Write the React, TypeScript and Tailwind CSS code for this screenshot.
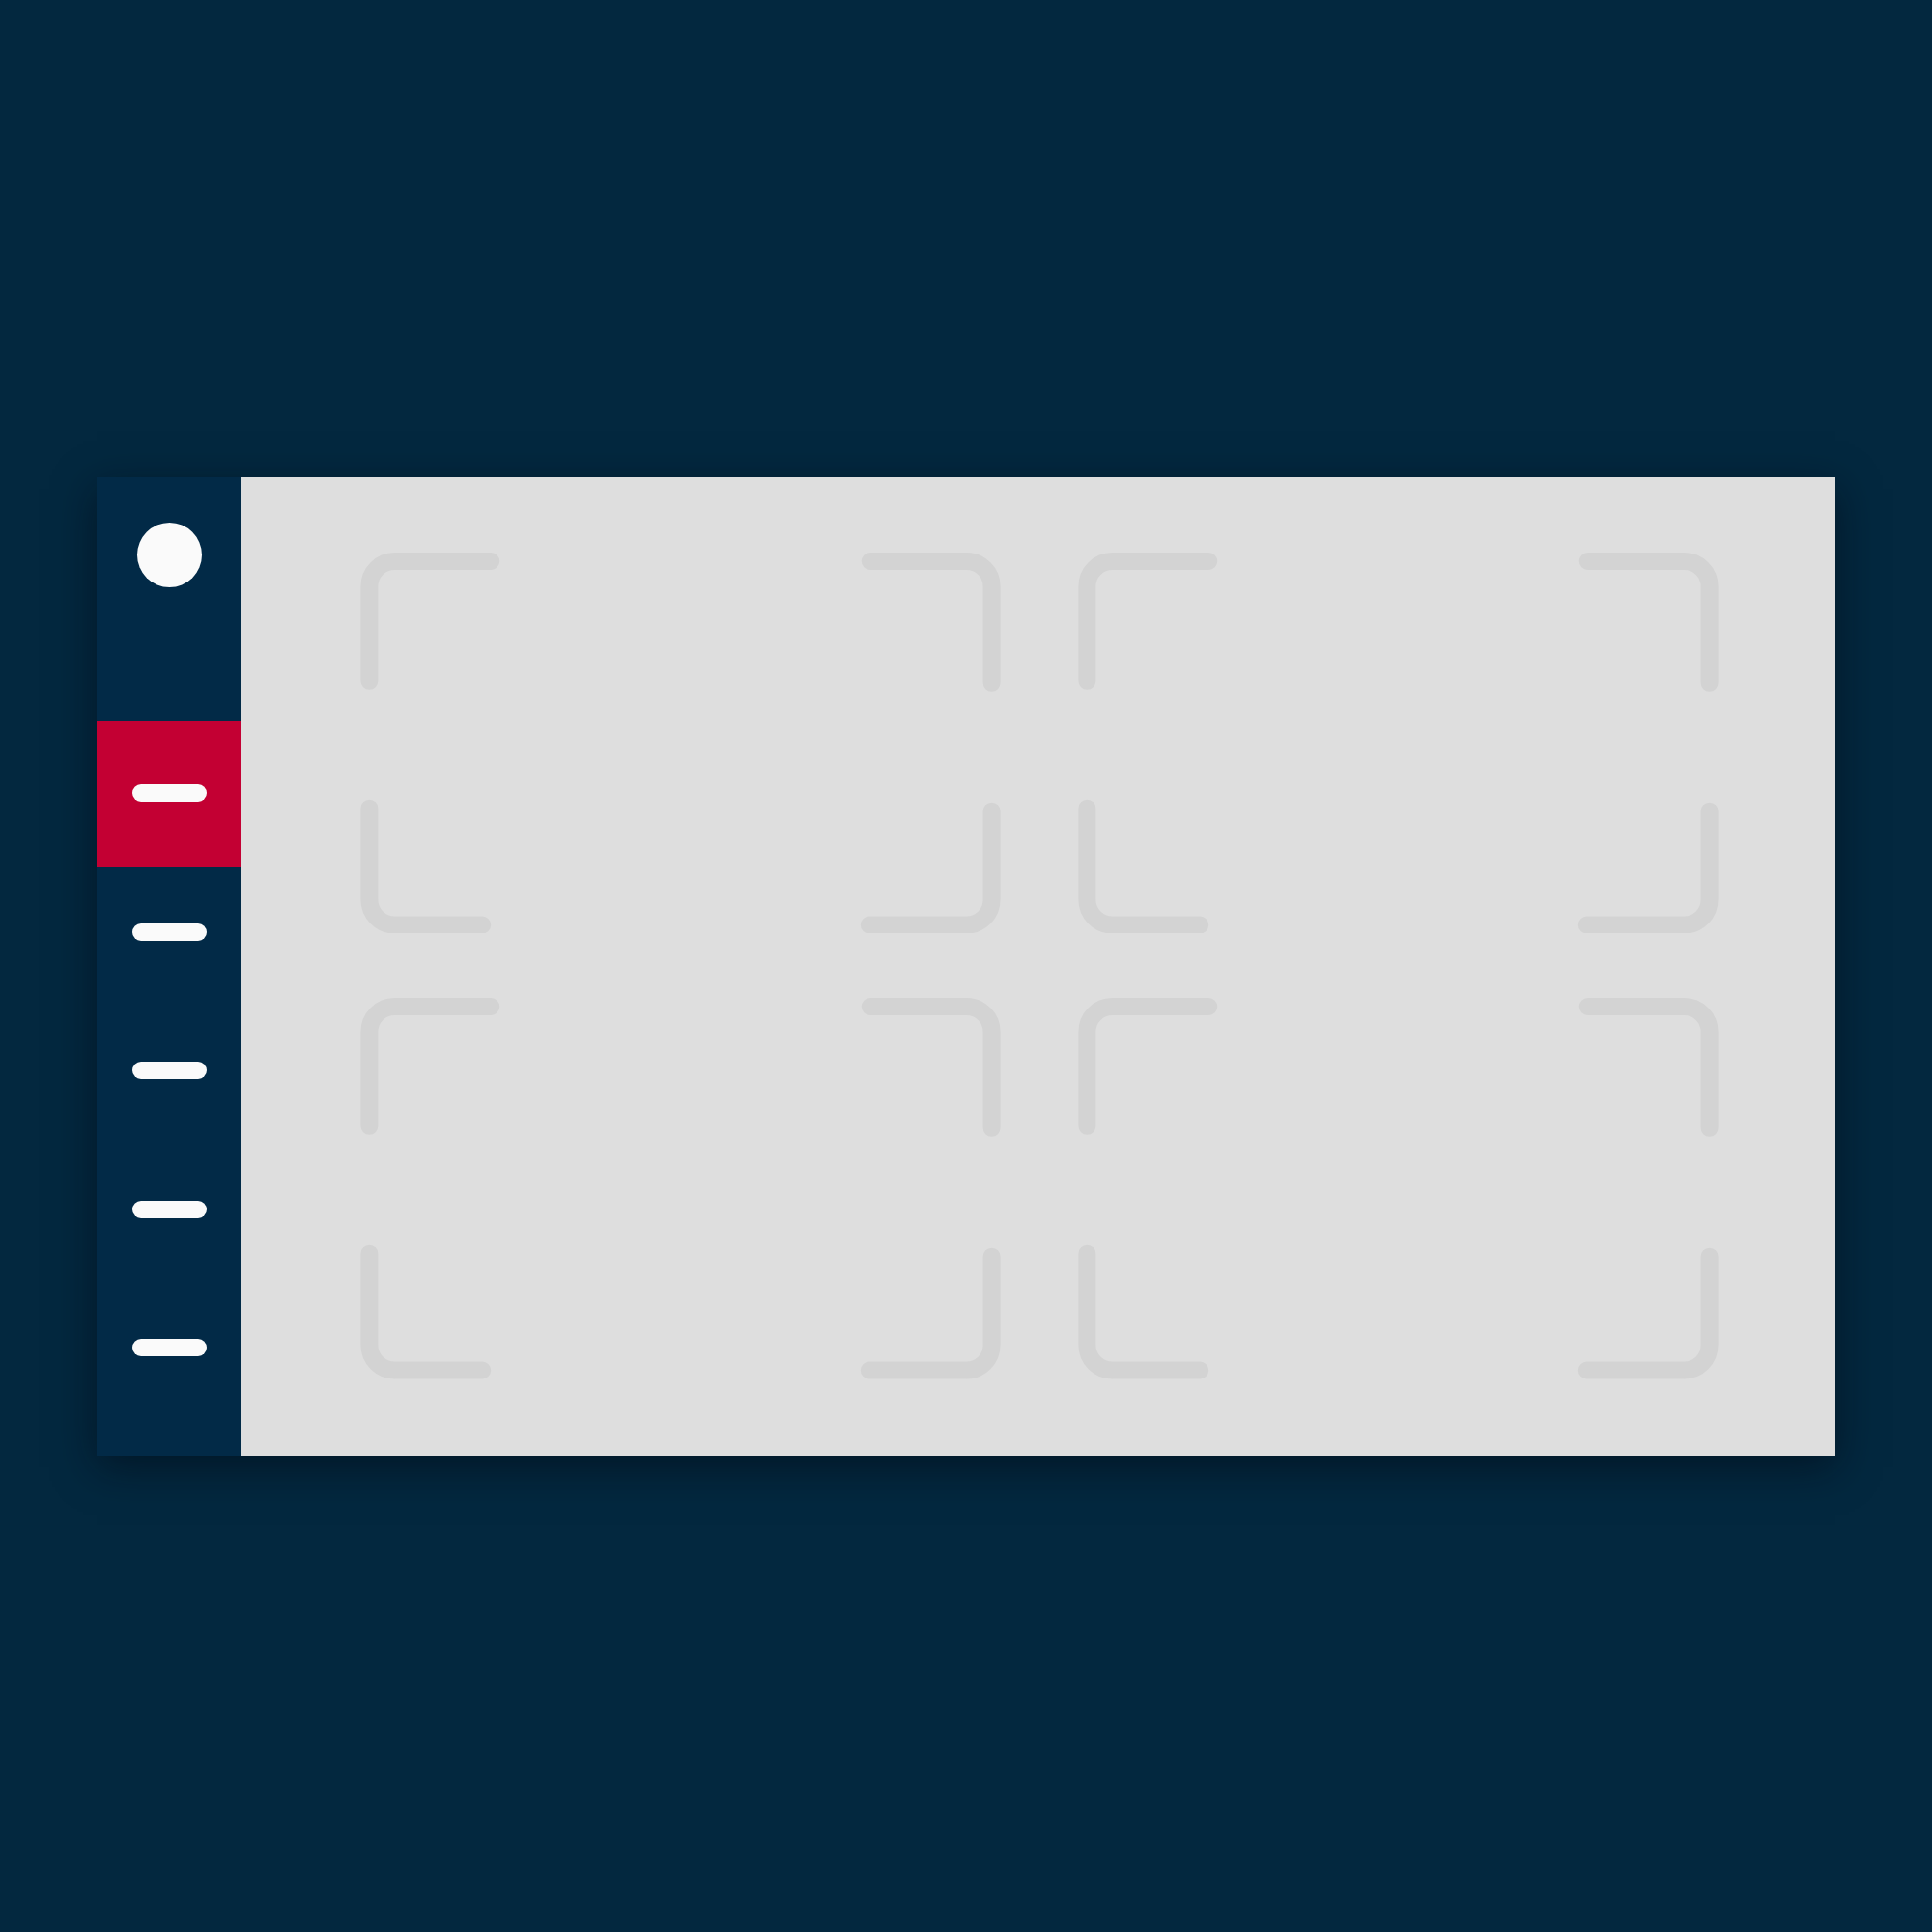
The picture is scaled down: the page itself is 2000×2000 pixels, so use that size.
const navItems = [
  { id: "home", active: true },
  { id: "library", active: false },
  { id: "recent", active: false },
  { id: "shared", active: false },
  { id: "settings", active: false },
];

const Frame = (): JSX.Element => (
  <svg
    className="block w-full h-full"
    viewBox="0 0 663 395"
    fill="none"
    stroke="#d3d3d3"
    strokeWidth={18}
    strokeLinecap="round"
    strokeLinejoin="round"
  >
    {/* corners */}
    <path d="M9 133 V35 A26 26 0 0 1 35 9 H135" />
    <path d="M528 9 H628 A26 26 0 0 1 654 35 V135" />
    <path d="M9 265 V360 A26 26 0 0 0 35 386 H126" />
    <path d="M654 268 V360 A26 26 0 0 1 628 386 H527" />
  </svg>
);

const App = (): JSX.Element => {
  return (
    <div className="w-[2000px] h-[2000px] bg-[#03283f] flex items-center justify-center">
      <div className="w-[1800px] h-[1013px] flex shadow-[0_12px_40px_rgba(0,10,20,0.55)]">
        {/* sidebar */}
        <aside className="w-[150px] shrink-0 bg-[#022a47] flex flex-col items-stretch pt-[47px]">
          <div className="w-[67px] h-[67px] rounded-full bg-[#fafafa] mx-auto" />
          <nav className="mt-[138px] flex flex-col">
            {navItems.map((item) =>
              item.active ? (
                <div
                  key={item.id}
                  className="h-[151px] -mb-[3.5px] bg-[#c30033] flex items-center justify-center"
                >
                  <div className="w-[77px] h-[18px] rounded-full bg-[#fafafa]" />
                </div>
              ) : (
                <div key={item.id} className="h-[143.5px] flex items-center justify-center">
                  <div className="w-[77px] h-[18px] rounded-full bg-[#fafafa]" />
                </div>
              )
            )}
          </nav>
        </aside>

        {/* content */}
        <main className="flex-1 bg-[#dedede] pt-[78px] pb-[79px] pl-[123px] pr-[121px] grid grid-cols-2 grid-rows-2 gap-x-[80px] gap-y-[67px]">
          <Frame />
          <Frame />
          <Frame />
          <Frame />
        </main>
      </div>
    </div>
  );
};

export default App;
